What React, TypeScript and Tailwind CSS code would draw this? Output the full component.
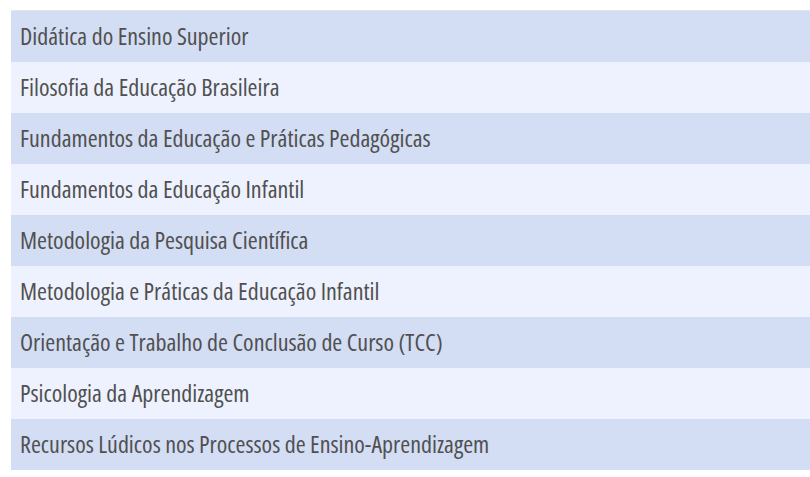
const disciplinas = [
  "Didática do Ensino Superior",
  "Filosofia da Educação Brasileira",
  "Fundamentos da Educação e Práticas Pedagógicas",
  "Fundamentos da Educação Infantil",
  "Metodologia da Pesquisa Científica",
  "Metodologia e Práticas da Educação Infantil",
  "Orientação e Trabalho de Conclusão de Curso (TCC)",
  "Psicologia da Aprendizagem",
  "Recursos Lúdicos nos Processos de Ensino-Aprendizagem",
];

export default function App() {
  return (
    <div className="min-h-screen w-[810px] bg-white pt-[10px] pl-[11px] font-['Open_Sans',sans-serif]">
      <div className="border-t border-[#e4e7ee]">
        {disciplinas.map((nome, i) => (
          <div
            key={nome}
            className={`flex h-[51px] items-center px-[9px] pb-[2px] text-[24px] font-normal text-[#505050] [font-stretch:75%] ${
              i % 2 === 0 ? "bg-[#d3ddf4]" : "bg-[#eef2fe]"
            }`}
          >
            {nome}
          </div>
        ))}
      </div>
    </div>
  );
}
